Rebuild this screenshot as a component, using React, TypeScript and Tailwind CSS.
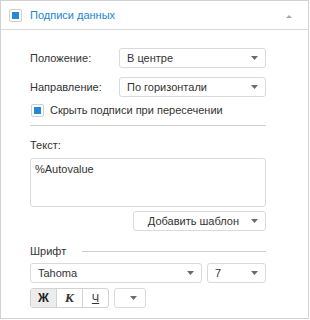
import React from "react";

function Caret({ className = "" }: { className?: string }) {
  return (
    <svg width="7" height="4" viewBox="0 0 7 4" className={className}>
      <path d="M0 0h7L3.5 4z" fill="#6b6b6b" />
    </svg>
  );
}

function Check() {
  return (
    <div className="flex h-[13px] w-[13px] items-center justify-center rounded-[2px] border border-[#cfcfcf] bg-white">
      <div className="h-[7px] w-[7px] bg-[#2389d4]" />
    </div>
  );
}

function Select({ value, className = "" }: { value: string; className?: string }) {
  return (
    <div className={`flex h-[20px] items-center justify-between rounded-[3px] border border-[#dadada] bg-white pl-[7px] pr-[7px] ${className}`}>
      <span className="leading-none">{value}</span>
      <Caret />
    </div>
  );
}

export default function App() {
  return (
    <div className="h-[320px] w-[310px] bg-white font-['Liberation_Sans',sans-serif] text-[11px] leading-[18px] text-[#333]">
      <div className="h-[319px] w-[309px] border border-[#d2d2d2]">
        {/* Header */}
        <div className="flex h-[29px] items-center border-b border-[#d9d9d9] pl-[8px] pr-[16px]">
          <Check />
          <span className="ml-[8px] text-[#2185d0]">Подписи данных</span>
          <svg width="6" height="3" viewBox="0 0 6 3" className="ml-auto mt-[2px]">
            <path d="M0 3h6L3 0z" fill="#a8a8a8" />
          </svg>
        </div>

        {/* Body */}
        <div className="ml-[29px] flex w-[236px] flex-col pt-[18px]">
          <div className="flex items-center">
            <span className="w-[89px]">Положение:</span>
            <Select value="В центре" className="flex-1" />
          </div>
          <div className="mt-[9px] flex items-center">
            <span className="w-[89px]">Направление:</span>
            <Select value="По горизонтали" className="flex-1" />
          </div>
          <div className="mt-[4px] flex items-center pl-[1px]">
            <Check />
            <span className="ml-[6px]">Скрыть подписи при пересечении</span>
          </div>
          <div className="mt-[6px] h-px bg-[#cfcfcf]" />

          <span className="mt-[12px] leading-[14px]">Текст:</span>
          <div className="mt-[6px] h-[49px] rounded-[3px] border border-[#dadada] px-[4px] pt-[1px]">
            %Autovalue
          </div>
          <div className="mt-[4px] flex justify-end">
            <div className="flex h-[20px] w-[133px] items-center justify-end rounded-[3px] border border-[#dadada] pr-[7px]">
              <span>Добавить шаблон</span>
              <Caret className="ml-[12px]" />
            </div>
          </div>

          <div className="mt-[13px] flex items-center">
            <span className="leading-[14px]">Шрифт</span>
            <div className="ml-auto h-px w-[184px] bg-[#cfcfcf]" />
          </div>
          <div className="mt-[5px] flex">
            <Select value="Tahoma" className="w-[172px]" />
            <Select value="7" className="ml-[5px] w-[59px]" />
          </div>
          <div className="mt-[5px] flex">
            <div className="flex h-[20px] overflow-hidden rounded-[3px] border border-[#d2d2d2]">
              <div className="flex w-[26px] items-center justify-center border-r border-[#d2d2d2] bg-[#ececec] text-[12px] font-bold text-[#222]">Ж</div>
              <div className="flex w-[26px] items-center justify-center border-r border-[#d2d2d2] font-['Liberation_Serif',serif] text-[13px] font-bold italic text-[#333]">К</div>
              <div className="flex w-[25px] items-center justify-center text-[11px] text-[#333] underline">Ч</div>
            </div>
            <div className="ml-[5px] flex h-[20px] w-[32px] items-center justify-center rounded-[3px] border border-[#dadada] pl-[6px]">
              <Caret />
            </div>
          </div>
        </div>
      </div>
    </div>
  );
}
